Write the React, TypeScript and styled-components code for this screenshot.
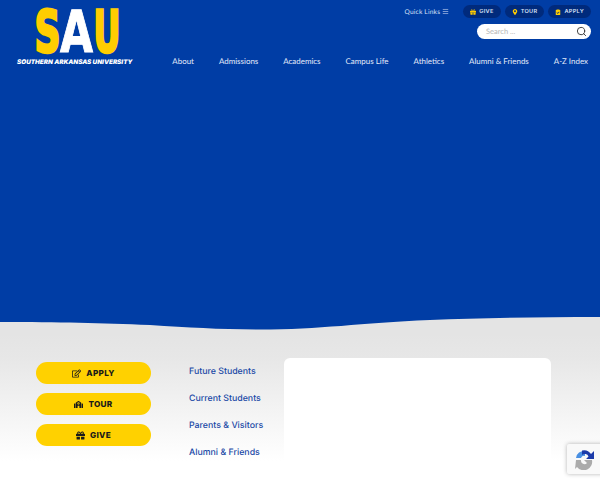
import styled, { createGlobalStyle } from 'styled-components';
import { Search, Menu } from 'lucide-react';
import { FaGift, FaMapMarkerAlt, FaClipboardCheck, FaRegEdit, FaSchool } from 'react-icons/fa';

const GlobalStyle = createGlobalStyle`
  html, body {
    margin: 0;
    padding: 0;
    height: 480px;
    overflow: hidden;
    background: #fff;
    font-family: 'Lato', 'Liberation Sans', sans-serif;
    text-rendering: geometricPrecision;
  }
`;

const Page = styled.div`
  width: 600px;
  height: 480px;
  position: relative;
  overflow: hidden;
`;

const Hero = styled.div`
  height: 333px;
  background: #003da5;
  padding: 0 9px 0 17px;
  box-sizing: border-box;
  display: flex;
  gap: 32px;
  align-items: flex-start;
`;

const LogoBlock = styled.div`
  width: 116px;
  display: flex;
  flex-direction: column;
  flex-shrink: 0;
`;

const LogoMark = styled.svg`
  width: 116px;
  height: 58px;
  display: block;
  overflow: visible;
`;

const LogoCaption = styled.div`
  font-family: 'Inter', 'Liberation Sans', sans-serif;
  font-size: 6.35px;
  line-height: 8px;
  font-weight: 900;
  font-style: italic;
  color: #fff;
  white-space: nowrap;
`;

const HeaderRight = styled.div`
  flex: 1;
  min-width: 0;
  display: flex;
  flex-direction: column;
  align-items: stretch;
`;

const TopRow = styled.div`
  display: flex;
  justify-content: flex-end;
  align-items: center;
  gap: 4px;
  padding-top: 5px;
`;

const QuickLinks = styled.span`
  display: flex;
  align-items: center;
  gap: 2px;
  margin-right: 10px;
  font-family: 'Lato', sans-serif;
  font-size: 6.6px;
  letter-spacing: 0.2px;
  color: #d6e0f6;
`;

const TopPill = styled.span`
  display: flex;
  align-items: center;
  gap: 3px;
  height: 13px;
  padding: 0 7px;
  border-radius: 7px;
  background: #002a7c;
  color: #d6e0f6;
  font-family: 'Inter', sans-serif;
  font-size: 5.6px;
  font-weight: 600;
  letter-spacing: 0.3px;

  svg {
    color: #ffcd00;
    width: 6px;
    height: 6px;
  }
`;

const SearchBox = styled.div`
  align-self: flex-end;
  margin-top: 6px;
  width: 114px;
  height: 15px;
  border-radius: 8px;
  background: #fff;
  display: flex;
  align-items: center;
  justify-content: space-between;
  padding: 0 4px 0 9px;
  box-sizing: border-box;
  color: #b5b5b5;
  font-family: 'Lato', sans-serif;
  font-size: 7.5px;
`;

const Nav = styled.nav`
  display: flex;
  justify-content: flex-end;
  gap: 25px;
  margin-top: 16px;
  padding-right: 3px;
`;

const NavLink = styled.a`
  color: #e3eafa;
  font-family: 'Lato', sans-serif;
  font-size: 7.95px;
  line-height: 12px;
  white-space: nowrap;
`;

const Wave = styled.svg`
  position: absolute;
  left: 0;
  top: 316px;
  width: 600px;
  height: 20px;
  display: block;
`;

const Lower = styled.div`
  height: 147px;
  background: linear-gradient(#e4e4e4 0, #e7e7e7 25px, #ffffff 128px);
  padding: 25px 0 0 36px;
  box-sizing: border-box;
  display: flex;
  align-items: flex-start;
`;

const ButtonColumn = styled.div`
  width: 115px;
  display: flex;
  flex-direction: column;
  gap: 9px;
  padding-top: 4px;
`;

const CtaButton = styled.a`
  height: 22px;
  border-radius: 11px;
  background: #ffd100;
  display: flex;
  align-items: center;
  justify-content: center;
  gap: 5px;
  color: #1a1a1a;
  font-family: 'Inter', sans-serif;
  font-size: 8.2px;
  font-weight: 800;
  letter-spacing: 0.3px;

  svg {
    width: 9px;
    height: 9px;
  }
`;

const LinkColumn = styled.div`
  width: 95px;
  margin-left: 38px;
  display: flex;
  flex-direction: column;
  gap: 13px;
  padding-top: 7px;
`;

const SideLink = styled.a`
  color: #1a49a6;
  font-family: 'Inter', sans-serif;
  font-size: 8.8px;
  font-weight: 500;
  line-height: 14px;
  white-space: nowrap;
`;

const WhiteCard = styled.div`
  width: 267px;
  height: 123px;
  background: #fff;
  border-radius: 6px 6px 0 0;
`;

const Recaptcha = styled.div`
  position: absolute;
  left: 567px;
  top: 444px;
  width: 40px;
  height: 30px;
  background: #f9f9f9;
  box-shadow: 0 0 4px rgba(0, 0, 0, 0.3);
  border-radius: 2px;
  display: flex;
  align-items: center;
  padding-left: 6px;
  box-sizing: border-box;
`;

const navItems = ['About', 'Admissions', 'Academics', 'Campus Life', 'Athletics', 'Alumni & Friends', 'A-Z Index'];
const sideLinks = ['Future Students', 'Current Students', 'Parents & Visitors', 'Alumni & Friends'];

export default function App() {
  return (
    <Page>
      <GlobalStyle />
      <Hero>
        <LogoBlock>
          <LogoMark viewBox="0 0 116 58">
            <g fontFamily="DejaVu Sans" fontWeight="700" fontSize="58">
              <text x="17.5" y="51.5" fill="#ffcd00" stroke="#ffcd00" strokeWidth="3" strokeLinejoin="miter" textLength="26" lengthAdjust="spacingAndGlyphs">S</text>
              <text x="43" y="52" fill="#fff" stroke="#fff" strokeWidth="1" textLength="33" lengthAdjust="spacingAndGlyphs">A</text>
              <text x="76.5" y="51.5" fill="#ffcd00" stroke="#ffcd00" strokeWidth="3" strokeLinejoin="miter" textLength="27" lengthAdjust="spacingAndGlyphs">U</text>
            </g>
          </LogoMark>
          <LogoCaption>SOUTHERN ARKANSAS UNIVERSITY</LogoCaption>
        </LogoBlock>
        <HeaderRight>
          <TopRow>
            <QuickLinks>Quick Links <Menu size={7} /></QuickLinks>
            <TopPill><FaGift />GIVE</TopPill>
            <TopPill><FaMapMarkerAlt />TOUR</TopPill>
            <TopPill><FaClipboardCheck />APPLY</TopPill>
          </TopRow>
          <SearchBox>Search ...<Search size={11} color="#333" /></SearchBox>
          <Nav>
            {navItems.map((item) => (
              <NavLink key={item}>{item}</NavLink>
            ))}
          </Nav>
        </HeaderRight>
      </Hero>
      <Wave viewBox="0 0 600 20">
        <path d="M0 6 C60 6 100 7 150 9 C190 11.5 220 13.5 260 13.5 C320 13.5 360 7 430 4 C480 2 540 1 600 1 L600 20 L0 20 Z" fill="#e4e4e4" />
      </Wave>
      <Lower>
        <ButtonColumn>
          <CtaButton><FaRegEdit />APPLY</CtaButton>
          <CtaButton><FaSchool />TOUR</CtaButton>
          <CtaButton><FaGift />GIVE</CtaButton>
        </ButtonColumn>
        <LinkColumn>
          {sideLinks.map((link) => (
            <SideLink key={link}>{link}</SideLink>
          ))}
        </LinkColumn>
        <WhiteCard />
      </Lower>
      <Recaptcha>
        <svg width="22" height="22" viewBox="0 0 22 22">
          <path d="M3 10 A8 8 0 0 1 12 3 L12 8 A3.5 3.5 0 0 0 8 10 Z" fill="#4a90e2" />
          <path d="M9 2.5 A8.5 8.5 0 0 1 18 6 L21 3 L21 11 L13 11 L15.5 8.5 A4 4 0 0 0 9 7 Z" fill="#1c3aa9" />
          <path d="M3 12 L8 12 A3.5 3.5 0 0 0 14 15 L11 12 L19 12 A8.5 8.5 0 0 1 4 19 L2 21 Z" fill="#ababab" />
        </svg>
      </Recaptcha>
    </Page>
  );
}
